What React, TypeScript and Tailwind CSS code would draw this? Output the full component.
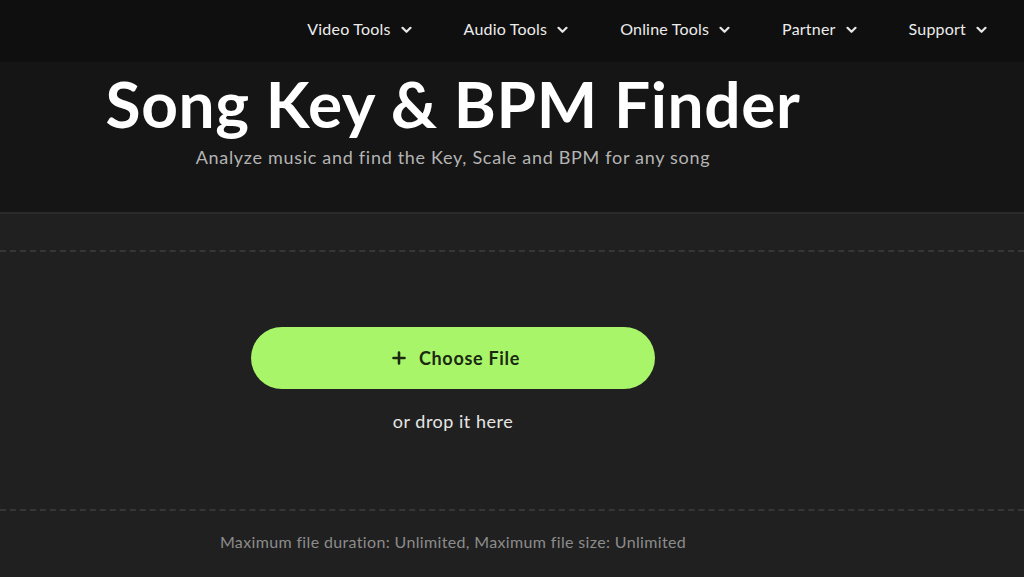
import React from "react";

const Chevron = () => (
  <svg width="11" height="8" viewBox="0 0 11 8" fill="none" className="ml-[10px] mt-[1px]">
    <path d="M1.5 1.8 L5.5 5.8 L9.5 1.8" stroke="#e8e8e8" strokeWidth="2.2" strokeLinecap="round" strokeLinejoin="round" />
  </svg>
);

const NavItem = ({ label }: { label: string }) => (
  <div className="flex items-center">
    <span className="text-[16px] text-[#ececec] tracking-[0.2px]">{label}</span>
    <Chevron />
  </div>
);

export default function App() {
  return (
    <div
      className="w-[1024px] h-[577px] overflow-hidden bg-[#202020] flex flex-col"
      style={{ fontFamily: "Lato, 'Noto Sans', sans-serif" }}
    >
      <header className="h-[62px] bg-[#0f0f0f] flex items-center justify-end pr-[37px] shrink-0">
        <nav className="flex items-center gap-[52px] pb-[4px]">
          <NavItem label="Video Tools" />
          <NavItem label="Audio Tools" />
          <NavItem label="Online Tools" />
          <NavItem label="Partner" />
          <NavItem label="Support" />
        </nav>
      </header>
      <section className="h-[152px] bg-[#151515] border-b-2 border-[#2b2b2b] shrink-0">
        <div className="w-[906px] flex flex-col items-center">
          <h1 className="text-[64px] font-bold text-white leading-none mt-[10px] tracking-[0.6px]">
            Song Key &amp; BPM Finder
          </h1>
          <p className="text-[18px] text-[#b4b4b4] mt-[8px] tracking-[0.7px]">
            Analyze music and find the Key, Scale and BPM for any song
          </p>
        </div>
      </section>
      <main className="flex-1 flex flex-col">
        <div className="h-[36px]" />
        <div className="border-t-2 border-dashed border-[#363636]" />
        <div className="w-[906px] flex flex-col items-center pt-[75px] h-[257px]">
          <button className="w-[404px] h-[62px] rounded-full bg-[#a9f56a] flex items-center justify-center gap-[13px] pl-[6px] text-[#1a2a10]">
            <svg width="14" height="14" viewBox="0 0 14 14">
              <path d="M7 1.5 V12.5 M1.5 7 H12.5" stroke="#1d2a12" strokeWidth="2.6" strokeLinecap="round" />
            </svg>
            <span className="text-[18px] font-bold tracking-[0.7px]">Choose File</span>
          </button>
          <p className="text-[18px] text-[#e6e6e6] mt-[19px] tracking-[0.5px]">or drop it here</p>
        </div>
        <div className="border-t-2 border-dashed border-[#363636]" />
        <div className="w-[906px] flex justify-center pt-[19px]">
          <p className="text-[16px] text-[#8c8c8c] tracking-[0.35px]">
            Maximum file duration: Unlimited, Maximum file size: Unlimited
          </p>
        </div>
      </main>
    </div>
  );
}
